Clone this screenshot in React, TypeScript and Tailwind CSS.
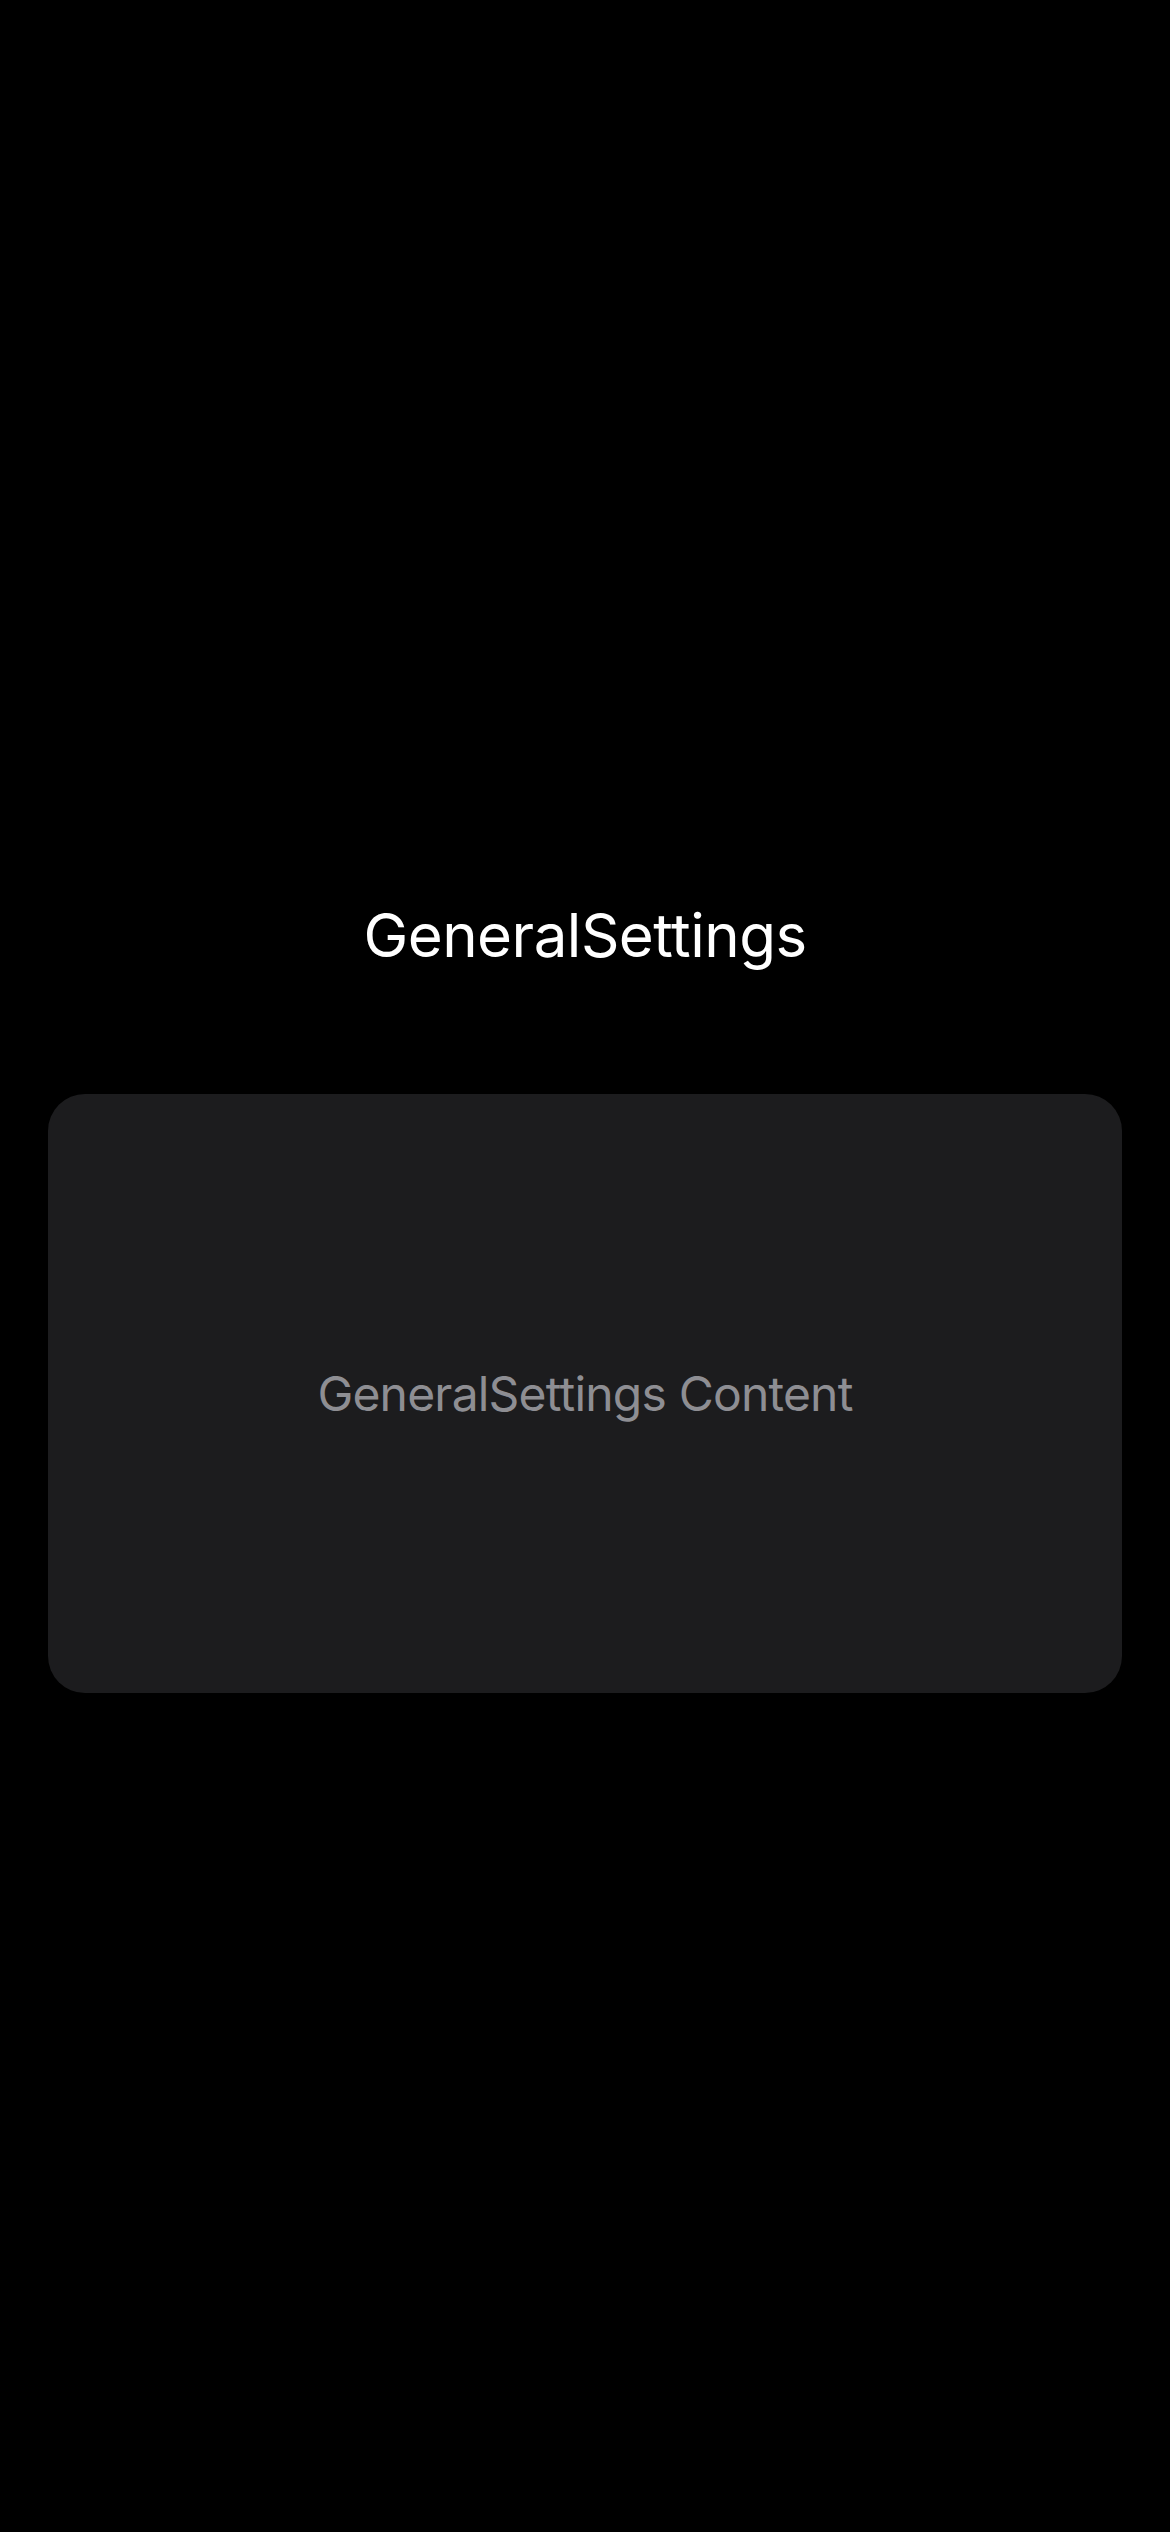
export default function App() {
  return (
    <div
      className="min-h-[2532px] w-full bg-black px-[48px] pt-[899px]"
      style={{ fontFamily: "Inter, 'Noto Sans', sans-serif" }}
    >
      <h1 className="text-center text-[60px] leading-[72px] font-normal text-white tracking-[-0.5px]">
        GeneralSettings
      </h1>
      <div className="mt-[123px] flex h-[599px] items-center justify-center rounded-[37px] bg-[#1c1c1e]">
        <p className="text-[48px] leading-[58px] tracking-[-0.8px] text-[#8e8e93]">GeneralSettings Content</p>
      </div>
    </div>
  );
}
